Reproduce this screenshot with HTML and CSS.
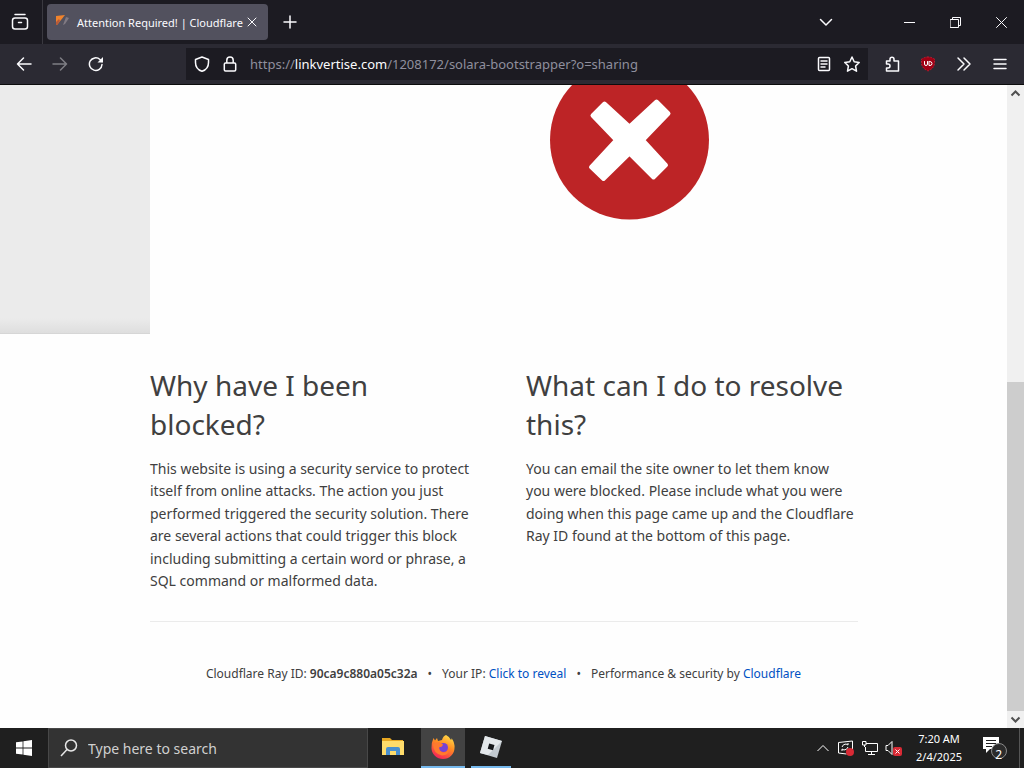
FILE: index.html
```html
<!DOCTYPE html>
<html lang="en">

<head>
    <meta charset="utf-8">
    <meta name="viewport" content="width=device-width, initial-scale=1">
    <title>Attention Required! | Cloudflare</title>
    <link rel="stylesheet" href="styles.css">
</head>

<body>
    <!-- tab strip -->
    <div class="tabs">
        <button class="view" aria-label="Firefox View">
            <svg width="18" height="18" viewBox="0 0 18 18"><path d="M4 1.500h10M4 5h10q2.500 0 2.500 2.500v6q0 2.500-2.500 2.500H4q-2.500 0-2.500-2.500v-6Q1.500 5 4 5zM7.500 9.500h3"/></svg>
        </button>
        <div class="tab">
            <svg class="favicon" width="16" height="16" viewBox="0 0 16 16"><path fill="#f0832c" d="M1 2l9-1-4 5-4 5H1z"/><path fill="#b65a3a" d="M1 8l3-3 1 2-3 4H1z"/><path fill="#817a83" d="M11 3l3 1-4 6-2 1z"/></svg>
            <span class="title">Attention Required! | Cloudflare</span>
            <button class="close" aria-label="Close tab">
                <svg width="10" height="10" viewBox="0 0 10 10"><path d="M1 1l8 8M9 1l-8 8"/></svg>
            </button>
        </div>
        <button class="new" aria-label="New tab">
            <svg width="14" height="14" viewBox="0 0 14 14"><path d="M7 1v12M1 7h12"/></svg>
        </button>
        <button class="list" aria-label="List all tabs">
            <svg width="14" height="14" viewBox="0 0 14 14"><path d="M1.500 4.500L7 10l5.500-5.500"/></svg>
        </button>
        <div class="window">
            <button aria-label="Minimize"><svg width="11" height="11" viewBox="0 0 11 11"><path d="M0 5.500h11"/></svg></button>
            <button aria-label="Restore"><svg width="11" height="11" viewBox="0 0 11 11"><path d="M.5 2.500h8v8h-8zM2.500 2.500v-2h8v8h-2"/></svg></button>
            <button aria-label="Close"><svg width="11" height="11" viewBox="0 0 11 11"><path d="M.5.5l10 10M10.500.5l-10 10"/></svg></button>
        </div>
    </div>

    <!-- navigation bar -->
    <div class="nav">
        <div class="history">
            <button aria-label="Back"><svg width="16" height="16" viewBox="0 0 16 16"><path d="M15 8H1.500M7.500 2l-6 6 6 6"/></svg></button>
            <button aria-label="Forward" disabled><svg width="16" height="16" viewBox="0 0 16 16"><path d="M1 8h13.500M8.500 2l6 6-6 6"/></svg></button>
            <button aria-label="Reload"><svg width="16" height="16" viewBox="0 0 16 16"><path d="M14 8.500A6.300 6.300 0 1 1 12 3.500l2 2"/><path class="solid" d="M15 1v5.500H9.500z"/></svg></button>
        </div>
        <div class="address">
            <svg width="16" height="16" viewBox="0 0 16 16"><path d="M8 1l6.500 2.500v3C14.500 10.500 12 14 8 15.300 4 14 1.500 10.500 1.500 6.500v-3z"/></svg>
            <svg width="16" height="16" viewBox="0 0 16 16"><path d="M3.500 7h9q1.200 0 1.200 1.200v5.600q0 1.200-1.200 1.200h-9q-1.200 0-1.200-1.200V8.200Q2.300 7 3.500 7zM4.800 7V4.200a3.200 3.200 0 0 1 6.400 0V7"/></svg>
            <a class="url" href="https://linkvertise.com/1208172/solara-bootstrapper?o=sharing">https://<b>linkvertise.com</b>/1208172/solara-bootstrapper?o=sharing</a>
            <button aria-label="Reader view"><svg width="16" height="16" viewBox="0 0 16 16"><path d="M3.500 1.500h9q1 0 1 1v11q0 1-1 1h-9q-1 0-1-1v-11q0-1 1-1zM5 5h6M5 8h6M5 11h4"/></svg></button>
            <button aria-label="Bookmark"><svg width="16" height="16" viewBox="0 0 16 16"><path d="M8 1l2.200 4.700 5 .7-3.600 3.600.9 5.200L8 12.700l-4.500 2.500.9-5.200L.8 6.400l5-.7z"/></svg></button>
        </div>
        <div class="tools">
            <button aria-label="Extensions"><svg width="16" height="16" viewBox="0 0 16 16"><path d="M2.500 8V5h3.500V3.300a2 2 0 0 1 4 0V5h4.500v10h-12v-3h1.500a2 2 0 0 0 0-4z"/></svg></button>
            <button aria-label="uBlock Origin"><svg class="ublock" width="16" height="16" viewBox="0 0 16 16"><path fill="#a00014" stroke="#c01c30" stroke-dasharray="1 2" d="M8 1q3 0 6.500 2v4q0 5-6.500 8-6.500-3-6.500-8V3Q5 1 8 1z"/><path stroke="#fff" d="M4.500 5.500V8q0 1.500 1.500 1.500T7.500 8V5.500M9 5.500v4h1q2 0 2-2t-2-2z"/></svg></button>
            <button aria-label="More tools"><svg width="16" height="16" viewBox="0 0 16 16"><path d="M2 2l6 6-6 6M8 2l6 6-6 6"/></svg></button>
            <button aria-label="Application menu"><svg width="16" height="16" viewBox="0 0 16 16"><path d="M2 3.500h12M2 8h12M2 12.500h12"/></svg></button>
        </div>
    </div>

    <!-- web page -->
    <div class="viewport">
        <main class="page">
            <div class="hero">
                <div class="shade"></div>
                <div class="figure">
                    <svg width="160" height="135" viewBox="0 25 160 135">
                        <circle cx="79.500" cy="80" r="79.500" fill="#bd2426"/>
                        <path fill="#fff" stroke="#fff" stroke-width="4" stroke-linejoin="round" d="M54.500 43.500l25 23 27-25L118.500 53.500 93 80l23 25-12.500 12.500-24-24-26 25.500L41 107l25-27-23.500-24.500z"/>
                    </svg>
                </div>
            </div>
            <div class="columns">
                <section>
                    <h2>Why have I been blocked?</h2>
                    <p>This website is using a security service to protect itself from online attacks. The action you just performed triggered the security solution. There are several actions that could trigger this block including submitting a certain word or phrase, a SQL command or malformed data.</p>
                </section>
                <section>
                    <h2>What can I do to resolve this?</h2>
                    <p>You can email the site owner to let them know<br>you were blocked. Please include what you were<br>doing when this page came up and the Cloudflare Ray ID found at the bottom of this page.</p>
                </section>
            </div>
            <footer>
                <span>Cloudflare Ray ID: <strong>90ca9c880a05c32a</strong></span>
                <span>&bull;</span>
                <span>Your IP: <a href="#">Click to reveal</a></span>
                <span>&bull;</span>
                <span>Performance &amp; security by <a href="#">Cloudflare</a></span>
            </footer>
        </main>
        <div class="scrollbar">
            <svg width="17" height="17" viewBox="0 0 17 17"><path d="M4.500 10.500l4-4 4 4"/></svg>
            <div class="track"><div class="thumb"></div></div>
            <svg width="17" height="17" viewBox="0 0 17 17"><path d="M4.500 6.500l4 4 4-4"/></svg>
        </div>
    </div>

    <!-- taskbar -->
    <div class="taskbar">
        <button class="start" aria-label="Start">
            <svg width="16" height="16" viewBox="0 0 16 16"><path d="M0 2.300l6.600-.9v6.200H0zM7.400 1.300L16 0v7.600H7.400zM0 8.400h6.600v6.200L0 13.700zM7.400 8.400H16V16l-8.600-1.200z"/></svg>
        </button>
        <label class="search">
            <svg width="18" height="18" viewBox="0 0 18 18"><circle cx="11" cy="6.500" r="5.500"/><path d="M7 10.500L1 17"/></svg>
            <input type="text" placeholder="Type here to search">
        </label>
        <div class="apps">
            <button aria-label="File Explorer">
                <svg width="24" height="24" viewBox="0 0 24 24"><path fill="#e8a822" d="M1 3h8l2 2h11v4H1z"/><path fill="#ffdc6b" d="M1 6h22v14H1z"/><path fill="#4a90cf" d="M5 20v-6q0-2 2-2h10q2 0 2 2v6h-4v-4H9v4z"/></svg>
            </button>
            <button class="active" aria-label="Firefox">
                <svg width="24" height="24" viewBox="0 0 24 24">
                    <defs><linearGradient id="fox" x1=".8" y1="0" x2=".3" y2="1"><stop offset="0" stop-color="#ffe14a"/><stop offset=".45" stop-color="#ff8a22"/><stop offset="1" stop-color="#f5205a"/></linearGradient></defs>
                    <path fill="url(#fox)" d="M15 0q4 2 5 5 1-1 .5-2Q24 8 23.500 13A11.500 11 0 0 1 .5 13Q.5 7 2.500 3l1.500 2.500L6 3l1 3 4-1q1-4 4-5z"/>
                    <circle cx="12.500" cy="12.500" r="4.500" fill="#7542d5"/>
                    <path fill="#ff7a2e" d="M2 9l6-2 4 2.500-1 2-3 1q0 4 4 5 5 0 6-4 0 7-7 7-9-2-9-11.500z"/>
                </svg>
            </button>
            <button class="running" aria-label="Roblox">
                <svg width="24" height="24" viewBox="0 0 24 24"><path fill="#c3cad0" d="M6 1l17 5-5 17-17-5z"/><path fill="#e4e8eb" d="M6 1l17 5-14 14-8-2z"/><path fill="#16181b" d="M10.200 8.500l5.300 1.500-1.500 5.300-5.300-1.500z"/></svg>
            </button>
        </div>
        <div class="tray">
            <svg width="16" height="16" viewBox="0 0 16 16"><path d="M2.500 11L8 5.500l5.500 5.500"/></svg>
            <svg width="18" height="16" viewBox="0 0 18 16"><path d="M1.500 2.500l14-1.500v8M1.500 2.500v10.500l8 1M5 7q1-3 4-3l2 1V3M11 7q-1 3-4 3l-2-1v2"/><circle class="alert" cx="13" cy="12" r="4"/></svg>
            <svg width="18" height="16" viewBox="0 0 18 16"><path d="M5 3.500h11.500v8H4.500V7M10.500 11.500v3M7 14.500h7M1.500 1.500H5V5H1.500zM3.500 5v2"/></svg>
            <svg width="18" height="16" viewBox="0 0 18 16"><path d="M1 5.500h2l4-4v13l-4-4H1z"/><rect class="alert" x="8" y="7" width="9" height="9" rx="2"/><path d="M10.500 9.500l4 4M14.500 9.500l-4 4"/></svg>
            <div class="clock">7:20 AM<br>2/4/2025</div>
            <button class="notes" aria-label="2 notifications">
                <svg width="26" height="24" viewBox="0 0 26 24"><path class="solid" d="M1 1h16v12H8l-4 4v-4H1z"/><path stroke="#1f1f1f" d="M4 4.500h10M4 7.500h10M4 10.500h6"/><circle cx="17" cy="15" r="7.500" fill="#2b2b2b" stroke="#8b8b8b"/></svg>
                <span class="count">2</span>
            </button>
        </div>
    </div>
</body>

</html>
```
FILE: styles.css
```css
* {
    margin: 0;
    padding: 0;
    box-sizing: border-box;
}

body {
    display: flex;
    flex-direction: column;
    height: 100vh;
    overflow: hidden;
    background: #fefefe;
    color: #404040;
    font-family: "Noto Sans", "Open Sans", sans-serif;
    font-size: 14px;
}

button {
    display: flex;
    align-items: center;
    justify-content: center;
    flex: none;
    border: 0;
    background: none;
    color: inherit;
    font-family: inherit;
}

svg {
    display: block;
    flex: none;
}

a {
    color: #0051c3;
    text-decoration: none;
}

/* browser bars */

.tabs,
.nav {
    display: flex;
    align-items: center;
    flex: none;
    color: #fbfbfe;
}

.tabs {
    height: 44px;
    background: #1c1b22;
}

.tabs svg,
.nav svg {
    fill: none;
    stroke: currentColor;
    stroke-width: 1.5;
    stroke-linecap: round;
    stroke-linejoin: round;
}

.tabs .window svg {
    stroke-width: 1;
}

.nav .solid {
    fill: currentColor;
    stroke: none;
}

.view {
    width: 43px;
    height: 44px;
    padding-right: 2px;
    border-right: 1px solid #3a3940;
}

.tab {
    display: flex;
    align-items: center;
    width: 221px;
    height: 36px;
    margin-left: 4px;
    padding: 0 8px;
    border-radius: 4px;
    background: #52515e;
}

.tab .favicon {
    stroke: none;
}

.title {
    flex: 1;
    margin-left: 6px;
    font-size: 11px;
    white-space: nowrap;
}

.close {
    width: 16px;
    height: 16px;
}

.close svg {
    stroke-width: 1;
}

.new {
    width: 44px;
    height: 36px;
}

.list {
    width: 36px;
    height: 36px;
    margin-left: auto;
}

.window {
    display: flex;
    margin-left: 42px;
}

.window button {
    width: 46px;
    height: 44px;
}

.nav {
    height: 41px;
    border-bottom: 1px solid #0c0c0d;
    background: #2b2a33;
}

.history {
    display: flex;
    width: 186px;
    padding-left: 6px;
}

.history button,
.tools button {
    width: 36px;
    height: 32px;
}

.history button:disabled {
    opacity: 0.4;
}

.address {
    display: flex;
    align-items: center;
    gap: 12px;
    flex: 1;
    min-width: 0;
    height: 32px;
    padding: 0 8px;
    background: #1c1b22;
}

.url {
    flex: 1;
    min-width: 0;
    color: #8f8f9d;
    font-size: 13px;
    white-space: nowrap;
    overflow: hidden;
}

.url b {
    color: #fbfbfe;
    font-weight: 400;
}

.tools {
    display: flex;
    padding: 0 6px;
}

.nav .ublock {
    stroke-width: 1;
}

/* blocked page */

.viewport {
    display: flex;
    flex: 1;
    min-height: 0;
}

.page {
    flex: 1;
    overflow: hidden;
}

.hero {
    display: flex;
    height: 249px;
}

.shade {
    width: 150px;
    border-bottom: 1px solid #d6d6d6;
    background: linear-gradient(#ebebeb 94%, #dedede);
}

.figure {
    display: flex;
    flex: 1;
    justify-content: center;
    padding-left: 102px;
}

.columns {
    display: grid;
    grid-template-columns: 1fr 1fr;
    gap: 44px;
    margin: 0 149px 0 150px;
    padding: 32px 0 29px;
    border-bottom: 1px solid #ebebeb;
}

h2 {
    margin-bottom: 14px;
    font-size: 28px;
    font-weight: 400;
    line-height: 39px;
}

.columns p {
    line-height: 1.6;
}

footer {
    display: flex;
    justify-content: center;
    gap: 10px;
    padding-top: 42px;
    font-size: 12px;
    line-height: 20px;
}

footer strong {
    font-weight: 600;
}

.scrollbar {
    display: flex;
    flex-direction: column;
    width: 17px;
    background: #f0f0f0;
}

.scrollbar svg {
    fill: none;
    stroke: #505050;
    stroke-width: 2;
}

.track {
    display: flex;
    flex-direction: column;
    justify-content: flex-end;
    flex: 1;
}

.thumb {
    height: 54%;
    background: #cdcdcd;
}

/* taskbar */

.taskbar {
    display: flex;
    flex: none;
    height: 40px;
    background: #1f1f1f;
    color: #fff;
}

.start {
    width: 48px;
    fill: #fff;
}

.search {
    display: flex;
    align-items: center;
    gap: 10px;
    width: 320px;
    padding: 0 11px;
    border: 1px solid #484848;
    background: #333;
}

.search svg {
    fill: none;
    stroke: #e6e6e6;
    stroke-width: 1.5;
}

.search input {
    flex: 1;
    min-width: 0;
    border: 0;
    outline: 0;
    background: none;
    color: #fff;
    font: inherit;
}

.search input::placeholder {
    color: #d0d0d0;
}

.apps {
    display: flex;
    gap: 6px;
    padding-left: 3px;
}

.apps button {
    width: 44px;
    border-bottom: 2px solid transparent;
}

.apps .active {
    border-color: #76b9ed;
    background: #434343;
}

.apps .running {
    width: 40px;
    border-color: #76b9ed;
}

.tray {
    display: flex;
    align-items: center;
    gap: 6px;
    margin-left: auto;
    padding-right: 4px;
}

.tray svg {
    fill: none;
    stroke: #fff;
}

.tray .alert {
    fill: #d92a35;
    stroke: none;
}

.tray .solid {
    fill: #fff;
    stroke: none;
}

.clock {
    width: 60px;
    font-size: 11px;
    line-height: 18px;
    text-align: center;
}

.notes {
    position: relative;
    width: 45px;
    height: 40px;
    padding-right: 4px;
    border-right: 1px solid #555;
}

.count {
    position: absolute;
    right: 17px;
    bottom: 5px;
    font-size: 12px;
    line-height: 16px;
}
```
